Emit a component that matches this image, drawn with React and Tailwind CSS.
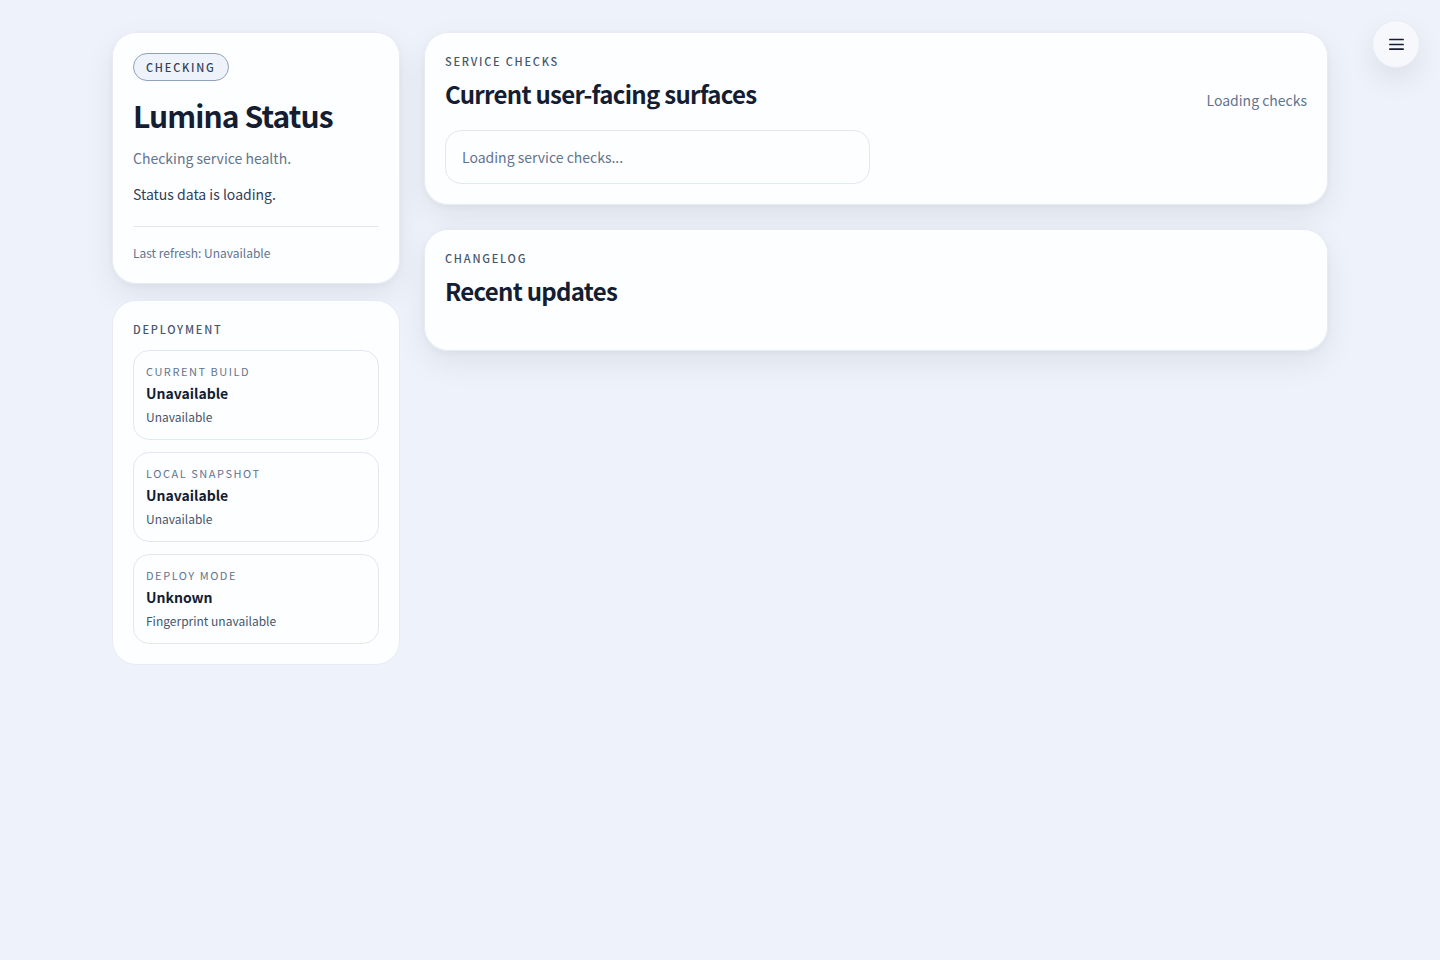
const deployment = [
  { label: "Current build", value: "Unavailable", detail: "Unavailable" },
  { label: "Local snapshot", value: "Unavailable", detail: "Unavailable" },
  { label: "Deploy mode", value: "Unknown", detail: "Fingerprint unavailable" },
];

const raised = "shadow-[0_2px_6px_rgba(15,35,42,0.04),0_12px_32px_rgba(15,35,42,0.07)]";

function Eyebrow({ children }) {
  return (
    <p className="text-[11px] leading-4 font-medium uppercase tracking-[0.16em] text-slate-600">{children}</p>
  );
}

function Panel({ className = "", children }) {
  return (
    <section className={`rounded-3xl border border-slate-200/80 bg-[#fdfeff]/95 p-5 ${className}`}>
      {children}
    </section>
  );
}

export default function App() {
  return (
    <div className="min-h-screen bg-[#eef2fa] font-['Noto_Sans_CJK_SC',sans-serif] text-[#141d31]">
      <button
        type="button"
        aria-label="Open menu"
        className="fixed top-5 right-5 flex size-12 items-center justify-center rounded-full border border-slate-200/80 bg-[#f6f8fc] shadow-[0_12px_28px_rgba(15,35,42,0.08)]"
      >
        <svg className="size-5" viewBox="0 0 20 20" fill="none" stroke="currentColor" strokeWidth="1.7" strokeLinecap="round">
          <path d="M3.9 5.5h13.2M3.9 10.5h13.2M3.9 15.2h13.2" />
        </svg>
      </button>

      <main className="mx-auto grid max-w-7xl grid-cols-[288px_minmax(0,1fr)] items-start gap-6 px-8 py-8">
        <aside className="flex flex-col gap-4">
          <Panel className={raised}>
            <span className="inline-flex h-7 items-center rounded-full border border-slate-400 bg-[#eef2fa] px-3 text-[11px] font-medium uppercase tracking-[0.16em] text-slate-700">
              Checking
            </span>
            <h1 className="mt-4 text-3xl leading-[37px] font-semibold tracking-[-0.03em]">Lumina Status</h1>
            <p className="mt-3 text-sm leading-6 text-slate-500">Checking service health.</p>
            <p className="mt-3 text-sm leading-6 text-slate-700">Status data is loading.</p>
            <div className="mt-5 border-t border-slate-200 pt-4">
              <p className="text-xs leading-5 text-slate-500">Last refresh: Unavailable</p>
            </div>
          </Panel>

          <Panel>
            <Eyebrow>Deployment</Eyebrow>
            <dl className="mt-[13px] flex flex-col gap-3">
              {deployment.map((item) => (
                <div key={item.label} className="rounded-2xl border border-slate-200 p-3">
                  <dt className="text-[11px] leading-4 uppercase tracking-[0.14em] text-slate-500">{item.label}</dt>
                  <dd className="mt-1 text-sm leading-5 font-semibold">{item.value}</dd>
                  <dd className="mt-1 text-xs leading-5 text-slate-600">{item.detail}</dd>
                </div>
              ))}
            </dl>
          </Panel>
        </aside>

        <div className="flex flex-col gap-6">
          <Panel className={raised}>
            <header className="flex items-end justify-between gap-4">
              <div>
                <Eyebrow>Service checks</Eyebrow>
                <h2 className="mt-2 text-2xl leading-[33px] font-semibold tracking-[-0.03em]">Current user-facing surfaces</h2>
              </div>
              <p className="text-sm leading-5 text-slate-500">Loading checks</p>
            </header>
            <div className="mt-5 grid grid-cols-2 gap-3">
              <div className="rounded-2xl border border-slate-200 p-4 text-sm leading-5 text-slate-500">
                Loading service checks...
              </div>
            </div>
          </Panel>

          <Panel className={raised}>
            <Eyebrow>Changelog</Eyebrow>
            <h2 className="mt-2 mb-[23px] text-2xl leading-[33px] font-semibold tracking-[-0.03em]">Recent updates</h2>
          </Panel>
        </div>
      </main>
    </div>
  );
}
